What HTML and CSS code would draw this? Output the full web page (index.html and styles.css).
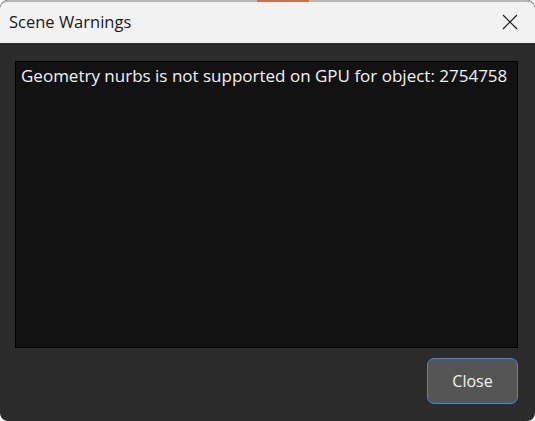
FILE: index.html
```html
<!DOCTYPE html>
<html>
<head>
<meta charset="utf-8">
<link rel="stylesheet" href="styles.css">
</head>
<body>
<div class="window">
  <div class="accent"></div>
  <div class="titlebar">
    <span class="title">Scene Warnings</span>
    <svg class="close-x" width="16" height="16" viewBox="0 0 16 16"><path d="M1 1 L15 15 M15 1 L1 15" stroke="#1a1a1a" stroke-width="1.2" fill="none"/></svg>
  </div>
  <div class="body">
    <div class="log">Geometry nurbs is not supported on GPU for object: 2754758</div>
    <div class="actions">
      <button class="btn">Close</button>
    </div>
  </div>
</div>
</body>
</html>
```
FILE: styles.css
```css
html, body {
  margin: 0;
  padding: 0;
  background: #ffffff;
}
body {
  width: 535px;
  height: 421px;
  overflow: hidden;
  font-family: "Open Sans", "Noto Sans", sans-serif;
}
.window {
  position: relative;
  width: 535px;
  height: 421px;
  box-sizing: border-box;
  border-radius: 8px;
  overflow: hidden;
  background: #2b2b2b;
  display: flex;
  flex-direction: column;
}
.accent {
  position: absolute;
  left: 257px;
  top: 0;
  width: 52px;
  height: 2px;
  background: #c4715a;
}
.titlebar {
  height: 44px;
  box-sizing: border-box;
  border-top: 2px solid #b8b8b8;
  background: #f2f2f2;
  display: flex;
  align-items: center;
  justify-content: space-between;
  padding: 0 17px 0 9px;
  border-radius: 8px 8px 0 0;
}
.title {
  font-size: 16.5px;
  color: #1a1a1a;
  margin-top: -2px;
}
.close-x {
  margin-top: -2px;
}
.body {
  flex: 1;
  display: flex;
  flex-direction: column;
  padding: 18px 17px 17px 15px;
}
.log {
  height: 287px;
  box-sizing: border-box;
  border: 1px solid #000;
  background: #121212;
  color: #f2f2f2;
  font-size: 17px;
  padding: 2px 5px;
  line-height: 24px;
  white-space: nowrap;
}
.actions {
  display: flex;
  justify-content: flex-end;
  margin-top: 10px;
}
.btn {
  width: 91px;
  height: 46px;
  box-sizing: border-box;
  border: 1.5px solid #3a8ae6;
  border-radius: 7px;
  background: #555555;
  color: #f2f2f2;
  font-family: "Open Sans", "Noto Sans", sans-serif;
  font-size: 16px;
  padding: 0;
}
```
